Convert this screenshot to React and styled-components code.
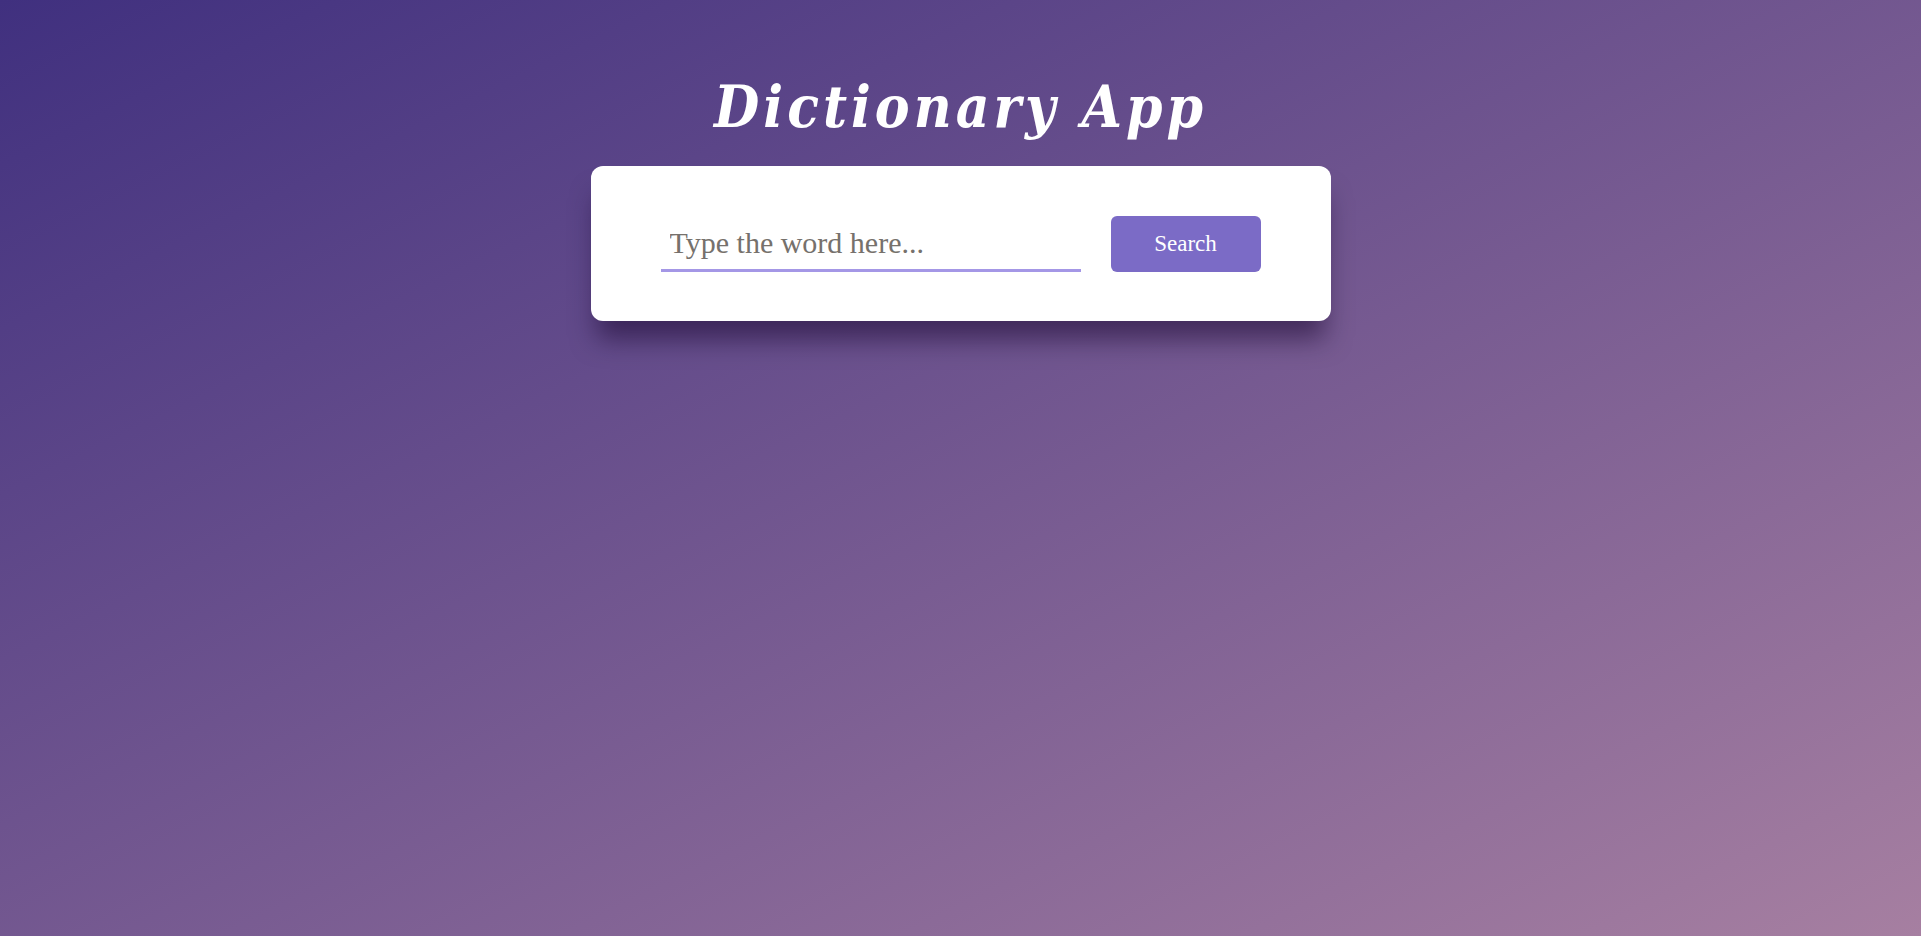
import React from "react";
import styled, { createGlobalStyle } from "styled-components";

const GlobalStyle = createGlobalStyle`
  html, body {
    margin: 0;
    padding: 0;
  }
  body {
    min-height: 100vh;
    background: linear-gradient(to bottom right, #40307f 0%, #a67fa1 100%);
    background-attachment: fixed;
    font-family: "Liberation Serif", "Times New Roman", serif;
  }
  * { box-sizing: border-box; }
`;

const Page = styled.main`
  min-height: 100vh;
  display: flex;
  flex-direction: column;
  align-items: center;
  padding-top: 71px;
`;

const Title = styled.h1`
  margin: 0 0 23px;
  font-family: "DejaVu Serif Condensed", "DejaVu Serif", serif;
  font-stretch: condensed;
  font-size: 58px;
  line-height: 72px;
  font-weight: 700;
  font-style: italic;
  letter-spacing: 4px;
  color: #ffffff;
`;

const Card = styled.section`
  width: 740px;
  padding: 50px 70px 49px;
  background: #ffffff;
  border-radius: 12px;
  box-shadow: 0 24px 26px -6px rgba(20, 0, 40, 0.5);
  display: flex;
  align-items: flex-end;
  gap: 30px;
`;

const WordInput = styled.input`
  flex: 1;
  height: 56px;
  padding: 0 9px;
  border: none;
  border-bottom: 3px solid #a497e6;
  outline: none;
  background: transparent;
  font-family: "Liberation Serif", "Times New Roman", serif;
  font-size: 30px;
  color: #333;
  &::placeholder {
    color: #76716c;
  }
`;

const SearchButton = styled.button`
  width: 150px;
  height: 56px;
  border: none;
  border-radius: 6px;
  background: #7b6bc6;
  color: #ffffff;
  font-family: "Liberation Serif", "Times New Roman", serif;
  font-size: 23px;
  cursor: pointer;
`;

export default function App() {
  return (
    <>
      <GlobalStyle />
      <Page>
        <Title>Dictionary App</Title>
        <Card>
          <WordInput type="text" placeholder="Type the word here..." />
          <SearchButton type="button">Search</SearchButton>
        </Card>
      </Page>
    </>
  );
}
